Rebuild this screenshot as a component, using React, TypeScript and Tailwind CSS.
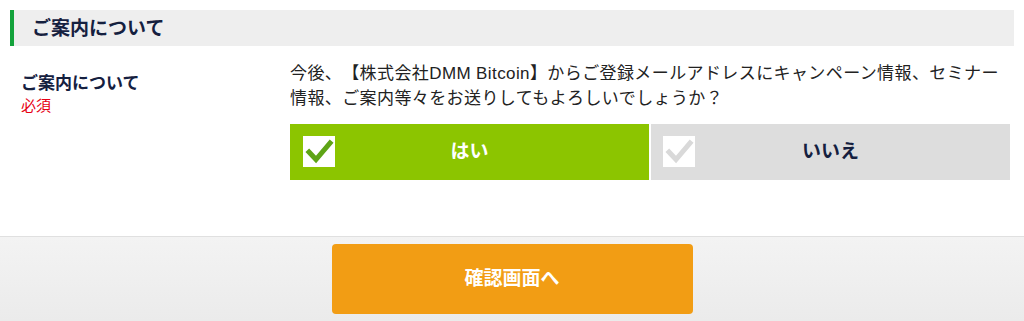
const font = { fontFamily: '"Liberation Sans", "Noto Sans CJK JP", "Noto Sans", sans-serif' };

const Check = ({ color }: { color: string }) => (
  <svg viewBox="0 0 32 31" className="w-[32px] h-[31px]">
    <rect x="0" y="0" width="32" height="31" fill="#ffffff" />
    <polyline
      points="6,16 13,23.5 27,7"
      fill="none"
      stroke={color}
      strokeWidth="5"
      strokeLinecap="square"
    />
  </svg>
);

const App = () => {
  return (
    <div
      className="w-full h-[321px] bg-white flex flex-col overflow-hidden text-[#333333] [text-spacing-trim:space-all]"
      style={font}
    >
      {/* Section header */}
      <div className="px-[10px] pt-[10px]">
        <div className="h-[36px] flex items-center bg-[#eeeeee] border-l-4 border-[#13a23b] pl-[18px]">
          <span className="text-[19px] font-bold text-[#15203f] leading-none">ご案内について</span>
        </div>
      </div>

      {/* Form row */}
      <div className="flex flex-1">
        <div className="w-[290px] pl-[21px] pt-[26px] flex flex-col">
          <span className="text-[17px] font-bold text-[#15203f] leading-[23px]">ご案内について</span>
          <span className="text-[15px] text-[#e60012] leading-[22px]">必須</span>
        </div>
        <div className="w-[730px] pt-[15px]">
          <p className="text-[17px] leading-[25px] tracking-[0.4px] text-[#222222]">
            今後、【株式会社DMM Bitcoin】からご登録メールアドレスにキャンペーン情報、セミナー
            <br />
            情報、ご案内等々をお送りしてもよろしいでしょうか？
          </p>
          <div className="mt-[13px] w-[720px] flex gap-[2px]">
            <button className="flex-1 h-[56px] bg-[#8cc500] flex items-center relative">
              <span className="absolute left-[13px] top-[12px]">
                <Check color="#5ea416" />
              </span>
              <span className="flex-1 text-center text-white text-[19px] font-bold">はい</span>
            </button>
            <button className="flex-1 h-[56px] bg-[#dddddd] flex items-center relative">
              <span className="absolute left-[12px] top-[12px]">
                <Check color="#d9d9d9" />
              </span>
              <span className="flex-1 text-center text-[#15203f] text-[19px] font-bold">いいえ</span>
            </button>
          </div>
        </div>
      </div>

      {/* Footer */}
      <div className="h-[85px] border-t border-[#e0e0e0] bg-gradient-to-b from-[#f3f3f3] to-[#ebebeb] flex justify-center pt-[7px]">
        <button className="w-[361px] h-[70px] rounded-[4px] bg-[#f29d14] text-white text-[19px] font-bold">
          確認画面へ
        </button>
      </div>
    </div>
  );
};

export default App;
